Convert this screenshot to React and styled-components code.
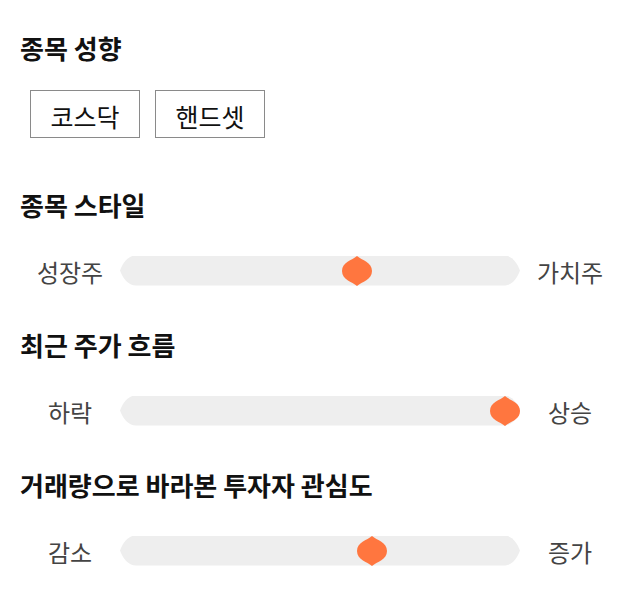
import React from "react";
import styled, { createGlobalStyle } from "styled-components";

const GlobalStyle = createGlobalStyle`
  html, body {
    margin: 0;
    padding: 0;
    background: #ffffff;
  }
  body {
    font-family: "Noto Sans CJK KR", "Noto Sans", sans-serif;
  }
`;

const sliders = [
  { title: "종목 스타일", left: "성장주", right: "가치주", value: 60 },
  { title: "최근 주가 흐름", left: "하락", right: "상승", value: 100 },
  { title: "거래량으로 바라본 투자자 관심도", left: "감소", right: "증가", value: 64 },
];

const Thumb = ({ value }) => (
  <ThumbWrap style={{ left: `calc(${value}% - ${value * 0.3}px)` }}>
    <svg width="30" height="30" viewBox="0 0 30 30">
      <path
        d="M15 0 C20 4.5 30 6 30 15 C30 24 20 25.5 15 30 C10 25.5 0 24 0 15 C0 6 10 4.5 15 0 Z"
        fill="#ff763f"
      />
    </svg>
  </ThumbWrap>
);

const App = () => {
  return (
    <Page>
      <GlobalStyle />
      <Section>
        <Heading>종목 성향</Heading>
        <ChipRow>
          <Chip>코스닥</Chip>
          <Chip>핸드셋</Chip>
        </ChipRow>
      </Section>

      {sliders.map((s) => (
        <Section key={s.title} $slider>
          <Heading>{s.title}</Heading>
          <SliderRow>
            <EndLabel>{s.left}</EndLabel>
            <Track>
              <Thumb value={s.value} />
            </Track>
            <EndLabel>{s.right}</EndLabel>
          </SliderRow>
        </Section>
      ))}
    </Page>
  );
};

const Page = styled.div`
  width: 640px;
  padding: 33px 20px 0 20px;
  box-sizing: border-box;
`;

const Section = styled.section`
  margin-bottom: ${(p) => (p.$slider ? "46px" : "52px")};
`;

const Heading = styled.h2`
  margin: 0;
  font-size: 26px;
  line-height: 30px;
  font-weight: 700;
  color: #111111;
`;

const ChipRow = styled.div`
  display: flex;
  gap: 15px;
  margin-top: 27px;
  padding-left: 10px;
`;

const Chip = styled.button`
  width: 110px;
  height: 48px;
  padding: 3px 0 0 0;
  border: 1px solid #8a8a8a;
  background: #ffffff;
  font-family: "Noto Sans CJK KR", "Noto Sans", sans-serif;
  font-size: 25px;
  color: #111111;
  display: flex;
  align-items: center;
  justify-content: center;
  box-sizing: border-box;
`;

const SliderRow = styled.div`
  display: grid;
  grid-template-columns: 100px 400px 100px;
  align-items: center;
  margin-top: 34px;
  height: 30px;
`;

const EndLabel = styled.span`
  text-align: center;
  font-size: 24px;
  line-height: 30px;
  color: #444444;
  padding-top: 3px;
`;

const Track = styled.div`
  position: relative;
  height: 30px;

  &::before {
    content: "";
    position: absolute;
    inset: 0;
    background: #eeeeee;
    clip-path: path("M16 0 H384 C392 0 397 7 400 15 C397 23 392 30 384 30 H16 C8 30 3 23 0 15 C3 7 8 0 16 0 Z");
  }
`;

const ThumbWrap = styled.div`
  position: absolute;
  top: 0;
  width: 30px;
  height: 30px;
  svg {
    display: block;
  }
`;

export default App;
